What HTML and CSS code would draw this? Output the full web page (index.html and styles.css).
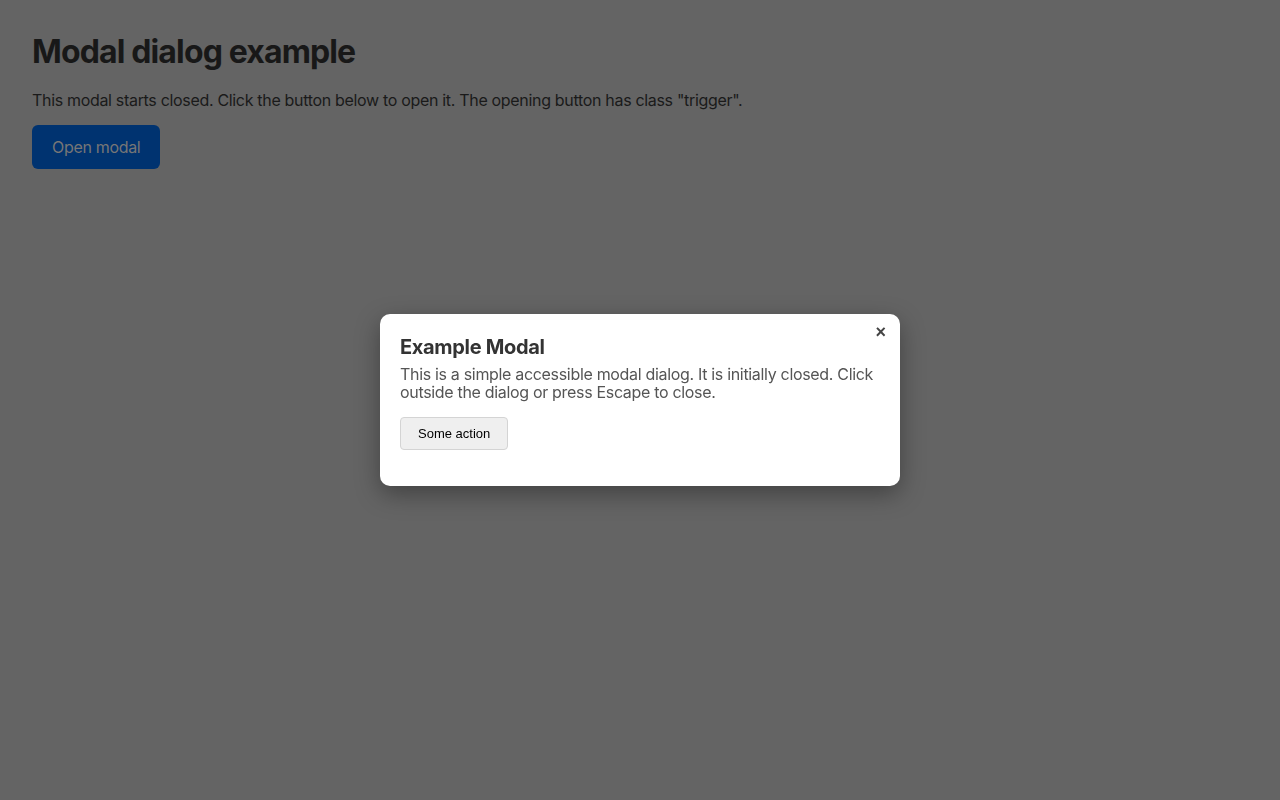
FILE: index.html
```html
<!DOCTYPE html>
<html lang="en">
<head>
    <meta charset="UTF-8">
    <meta name="viewport" content="width=device-width, initial-scale=1.0">
    <title>Modal dialog example</title>
    <link rel="stylesheet" href="styles.css">
</head>
<body>

    <main class="page">
        <h1>Modal dialog example</h1>
        <p>This modal starts closed. Click the button below to open it. The opening button has class "trigger".</p>
        <button class="trigger" type="button">Open modal</button>
    </main>

    <!-- Modal -->
    <div class="backdrop">
        <div class="modal" role="dialog" aria-modal="true" aria-labelledby="modalTitle">
            <button class="close" type="button" aria-label="Close">&times;</button>
            <h2 id="modalTitle">Example Modal</h2>
            <p>This is a simple accessible modal dialog. It is initially closed. Click outside the dialog or press Escape to close.</p>
            <button class="action" type="button">Some action</button>
        </div>
    </div>

</body>
</html>
```

FILE: styles.css
```css
body {
    margin: 0;
    font-family: Inter, "Noto Sans", sans-serif;
    letter-spacing: -0.02em;
    background-color: #646464;
    color: #1a1a1a;
}
.page {
    padding: 32px;
}
h1 {
    margin: 0 0 20px;
    font-size: 32px;
    line-height: 39px;
    font-weight: 700;
    letter-spacing: -0.027em;
    color: #181818;
}
.page p {
    margin: 0 0 15px;
    font-size: 16px;
    line-height: 19px;
}
.trigger {
    padding: 0 20px;
    height: 44px;
    border: none;
    border-radius: 6px;
    background: #003370;
    color: #767676;
    font-family: inherit;
    font-size: 16px;
    letter-spacing: inherit;
}
.backdrop {
    position: fixed;
    inset: 0;
    display: flex;
    align-items: center;
    justify-content: center;
}
.modal {
    position: relative;
    width: 480px;
    padding: 21px 20px 36px;
    background: white;
    border-radius: 10px;
    box-shadow: 0 8px 24px rgba(0, 0, 0, 0.35);
}
.modal h2 {
    margin: 0 0 6px;
    font-size: 20px;
    line-height: 24px;
    font-weight: 700;
    color: #333;
}
.modal p {
    margin: 0 0 16px;
    font-size: 16px;
    line-height: 18px;
    color: #555;
}
.action {
    height: 33px;
    padding: 0 17px;
    border: 1px solid #d4d4d4;
    border-radius: 4px;
    background: #efefef;
    color: #000;
    font-family: "Liberation Sans", Arial, sans-serif;
    font-size: 13px;
    letter-spacing: 0;
}
.close {
    position: absolute;
    top: 8px;
    right: 14px;
    padding: 0;
    border: none;
    background: none;
    color: #444;
    font-family: "Liberation Sans", Arial, sans-serif;
    font-size: 18px;
    font-weight: 700;
    line-height: 20px;
    letter-spacing: 0;
}
```
